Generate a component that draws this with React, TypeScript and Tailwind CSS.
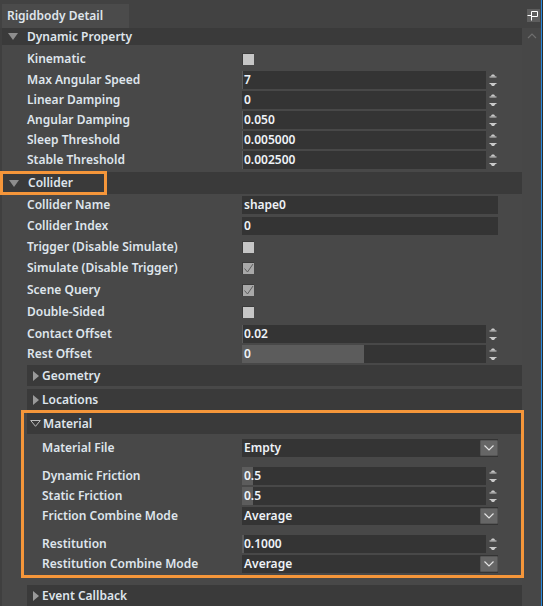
import React from "react";

// 数値入力の右にある上下ボタン
const Spinner = () => (
  <svg width="10" height="20" viewBox="0 0 10 20" className="shrink-0 ml-[2px]">
    <path d="M2.5 6.5 L4 4.5 L6 4.5 L7.5 6.5 Z" fill="#c9c9c9" />
    <rect x="1.5" y="6.5" width="7" height="1" fill="#c9c9c9" />
    <rect x="1.5" y="13" width="7" height="1" fill="#c9c9c9" />
    <path d="M2.5 14 L7.5 14 L6 16 L4 16 Z" fill="#c9c9c9" />
  </svg>
);

const Check = ({ checked }: { checked?: boolean }) => (
  <div
    className={
      checked
        ? "w-[12px] h-[12px] bg-[#a9a9a9] border-t border-l border-[#3a3a3a] flex items-center justify-center"
        : "w-[12px] h-[12px] bg-[#c6c6c6] border-t border-l border-[#3a3a3a]"
    }
  >
    {checked && (
      <svg width="11" height="11" viewBox="0 0 11 11">
        <path d="M1.5 5.5 L4.5 9 L10 1" stroke="#5e5e5e" strokeWidth="1" fill="none" />
      </svg>
    )}
  </div>
);

const NumInput = ({ value, fill = 0 }: { value: string; fill?: number }) => (
  <div className="flex items-center">
    <div className="relative w-[244px] h-[18px] bg-[#343434]">
      <div className="absolute left-0 top-0 h-full bg-[#5c5c5c]" style={{ width: fill }} />
      <span className="relative pl-[2px] leading-[18px] text-[#eef2f7]">{value}</span>
    </div>
    <Spinner />
  </div>
);

const TextInput = ({ value }: { value: string }) => (
  <div className="w-[256px] h-[18px] bg-[#343434] pl-[2px] leading-[18px] text-[#eef2f7]">
    {value}
  </div>
);

const Select = ({ value }: { value: string }) => (
  <div className="w-[256px] h-[18px] bg-[#343434] flex items-center justify-between">
    <span className="pl-[2px] leading-[18px] text-[#eef2f7]">{value}</span>
    <div className="w-[18px] h-[16px] bg-[#666666] border border-[#565656] rounded-[1px] flex items-center justify-center">
      <svg width="12" height="8" viewBox="0 0 12 8">
        <path d="M1.5 1.5 L6 6 L10.5 1.5" stroke="#e4e4e4" strokeWidth="1.2" fill="none" />
      </svg>
    </div>
  </div>
);

const Row = ({
  label,
  h = "h-[20px]",
  pad = "w-[240px] pl-[25px]",
  children,
}: {
  label: string;
  h?: string;
  pad?: string;
  children?: React.ReactNode;
}) => (
  <div className={`flex items-center shrink-0 ${h}`}>
    <div className={`shrink-0 leading-none ${pad}`}>{label}</div>
    {children}
  </div>
);

// Material内の行はラベル位置だけ違う
const MRow = (props: { label: string; h?: string; children?: React.ReactNode }) => (
  <Row {...props} pad="w-[215px] pl-[15px]" />
);

const TriDown = () => (
  <svg width="10" height="7" viewBox="0 0 10 7" className="shrink-0">
    <path d="M0 0 L10 0 L5 7 Z" fill="#8e8e8e" />
  </svg>
);

const TriRight = () => (
  <svg width="6" height="10" viewBox="0 0 6 10" className="shrink-0">
    <path d="M0 0 L6 5 L0 10 Z" fill="#9a9a9a" />
  </svg>
);

const TriOpen = () => (
  <svg width="11" height="7" viewBox="0 0 11 7" className="shrink-0">
    <path d="M0.7 0.5 L10.3 0.5 L5.5 6.3 Z" stroke="#bdbdbd" strokeWidth="1" fill="none" />
  </svg>
);

const SubHeader = ({ label, mt }: { label: string; mt: string }) => (
  <div className={`ml-[25px] h-[21px] shrink-0 bg-[#3a3a3a] flex items-center pl-[6px] gap-[3px] ${mt}`}>
    <TriRight />
    <span className="leading-none">{label}</span>
  </div>
);

export default function App() {
  return (
    <div className="w-[543px] h-[606px] overflow-hidden bg-[#424242] flex font-['Noto_Sans',sans-serif] text-[12px] font-semibold text-[#dfe5ec]">
      <div className="w-[541px] flex flex-col">
        {/* タブバー */}
        <div className="h-[28px] shrink-0 flex items-start">
          <div className="ml-[2px] mt-[4px] w-[127px] h-[24px] bg-[#4b4b4b] pl-[5px] flex items-center leading-none">
            Rigidbody Detail
          </div>
          <div className="ml-auto mt-[9px] mr-[1px] w-[13px] h-[13px] bg-[#5d5d5d] flex items-center justify-center">
            <svg width="13" height="13" viewBox="0 0 13 13">
              <path d="M0.5 6.5 H4.5 M4.5 2.5 V11.5 M4.5 2.5 H10.5 V7.5 H4.5" stroke="#ffffff" strokeWidth="1" fill="none" />
            </svg>
          </div>
        </div>

        <div className="flex-1 flex min-h-0">
          <div className="w-[2px] shrink-0 bg-[#3f3f3f]" />
          {/* 本体 */}
          <div className="w-[520px] shrink-0 bg-[#484848] flex flex-col">
            <div className="h-[17px] shrink-0 bg-[#3a3a3a] flex items-center pl-[6px] gap-[9px]">
              <TriDown />
              <span className="leading-none">Dynamic Property</span>
            </div>
            <Row label="Kinematic" h="h-[25px] pt-[2px]">
              <Check />
            </Row>
            <Row label="Max Angular Speed">
              <NumInput value="7" fill={1} />
            </Row>
            <Row label="Linear Damping">
              <NumInput value="0" />
            </Row>
            <Row label="Angular Damping">
              <NumInput value="0.050" fill={1} />
            </Row>
            <Row label="Sleep Threshold">
              <NumInput value="0.005000" fill={1} />
            </Row>
            <Row label="Stable Threshold">
              <NumInput value="0.002500" fill={1} />
            </Row>

            <div className="relative mt-[2px] h-[22px] shrink-0 bg-[#3a3a3a] flex items-center pl-[7px] gap-[9px]">
              <TriDown />
              <span className="leading-none">Collider</span>
              <div className="absolute left-[-2px] top-[-1px] w-[107px] h-[24px] border-[3px] border-[#f5963a]" />
            </div>
            <Row label="Collider Name" h="h-[21px]">
              <TextInput value="shape0" />
            </Row>
            <Row label="Collider Index" h="h-[21px]">
              <TextInput value="0" />
            </Row>
            <Row label="Trigger (Disable Simulate)" h="h-[21px]">
              <Check />
            </Row>
            <Row label="Simulate (Disable Trigger)" h="h-[22px]">
              <Check checked />
            </Row>
            <Row label="Scene Query" h="h-[22px]">
              <Check checked />
            </Row>
            <Row label="Double-Sided" h="h-[22px]">
              <Check />
            </Row>
            <Row label="Contact Offset" h="h-[21px]">
              <NumInput value="0.02" fill={1} />
            </Row>
            <Row label="Rest Offset">
              <NumInput value="0" fill={122} />
            </Row>

            <SubHeader label="Geometry" mt="mt-[1px]" />
            <SubHeader label="Locations" mt="mt-[3px]" />

            {/* Material */}
            <div className="relative ml-[25px] mt-[3px] shrink-0 flex flex-col">
              <div className="h-[21px] bg-[#3a3a3a] flex items-center pl-[3px] gap-[2px]">
                <TriOpen />
                <span className="leading-none">Material</span>
              </div>
              <MRow label="Material File" h="h-[20px] mt-[4px]">
                <Select value="Empty" />
              </MRow>
              <div className="h-[8px]" />
              <MRow label="Dynamic Friction">
                <NumInput value="0.5" fill={11} />
              </MRow>
              <MRow label="Static Friction">
                <NumInput value="0.5" fill={11} />
              </MRow>
              <MRow label="Friction Combine Mode">
                <Select value="Average" />
              </MRow>
              <div className="h-[8px]" />
              <MRow label="Restitution">
                <NumInput value="0.1000" fill={2} />
              </MRow>
              <MRow label="Restitution Combine Mode">
                <Select value="Average" />
              </MRow>
              <div className="absolute left-[-6px] right-[-2px] top-[-3px] bottom-[-4px] border-[3px] border-[#f5963a]" />
            </div>

            <SubHeader label="Event Callback" mt="mt-[11px]" />
          </div>
          {/* スクロールバー */}
          <div className="w-[19px] shrink-0 bg-[#474747] flex justify-center pt-[5px]">
            <svg width="10" height="6" viewBox="0 0 10 6">
              <path d="M1 5 L5 1 L9 5" stroke="#6f6f6f" strokeWidth="1.2" fill="none" />
            </svg>
          </div>
        </div>
      </div>
      <div className="w-[1px] bg-[#2a8be0]" />
      <div className="w-[1px] bg-[#2b2b2b]" />
    </div>
  );
}
